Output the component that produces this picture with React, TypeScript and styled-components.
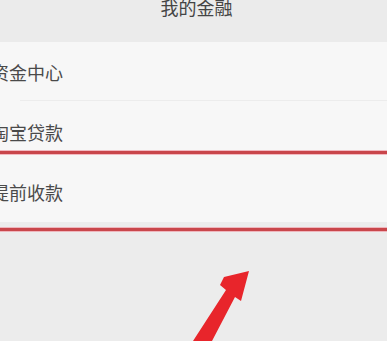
import React from "react";
import styled, { createGlobalStyle } from "styled-components";

const Global = createGlobalStyle`
  html, body {
    margin: 0;
    padding: 0;
    background: #ececec;
    overflow: hidden;
  }
  body {
    font-family: "Noto Sans CJK SC", "Noto Sans", sans-serif;
  }
`;

const Screen = styled.div`
  position: relative;
  width: 387px;
  height: 341px;
  background: #ececec;
  overflow: hidden;
`;

const Header = styled.header`
  height: 42px;
  display: flex;
  justify-content: center;
  align-items: flex-start;
  background: #ebebeb;
`;

const Title = styled.h1`
  margin: -3px 0 0 6px;
  font-size: 18px;
  line-height: 20px;
  font-weight: 400;
  color: #444;
`;

const List = styled.ul`
  margin: 0;
  padding: 0;
  list-style: none;
  background: #f7f7f7;
`;

const Row = styled.li<{ $divider?: boolean }>`
  height: 60px;
  display: flex;
  align-items: center;
  position: relative;
  &::after {
    content: "";
    display: ${(p) => (p.$divider ? "block" : "none")};
    position: absolute;
    left: 20px;
    right: 0;
    bottom: 1px;
    height: 1px;
    background: #ececec;
  }
`;

const Label = styled.span`
  margin-left: -9px;
  font-size: 18px;
  line-height: 24px;
  color: #4a4a4a;
  letter-spacing: 0;
`;

const Highlight = styled.div`
  position: absolute;
  left: -10px;
  right: -10px;
  top: 151px;
  height: 74px;
  border: 3px solid #c9464b;
  box-shadow: 0 0 0 1px rgba(240, 160, 170, 0.7),
    inset 0 0 0 1px rgba(240, 160, 170, 0.7);
`;

const Arrow = styled.svg`
  position: absolute;
  left: 0;
  top: 0;
  pointer-events: none;
`;

const items = ["资金中心", "淘宝贷款", "提前收款"];

export default function App() {
  return (
    <Screen>
      <Global />
      <Header>
        <Title>我的金融</Title>
      </Header>
      <List>
        {items.map((t, i) => (
          <Row key={t} $divider={i === 0}>
            <Label>{t}</Label>
          </Row>
        ))}
      </List>
      <Highlight />
      <Arrow width="387" height="341" viewBox="0 0 387 341">
        <polygon
          points="249,271 224,277 220,285 226,290 193,341 212,341 235,297 241,301"
          fill="#e8252b"
        />
      </Arrow>
    </Screen>
  );
}
